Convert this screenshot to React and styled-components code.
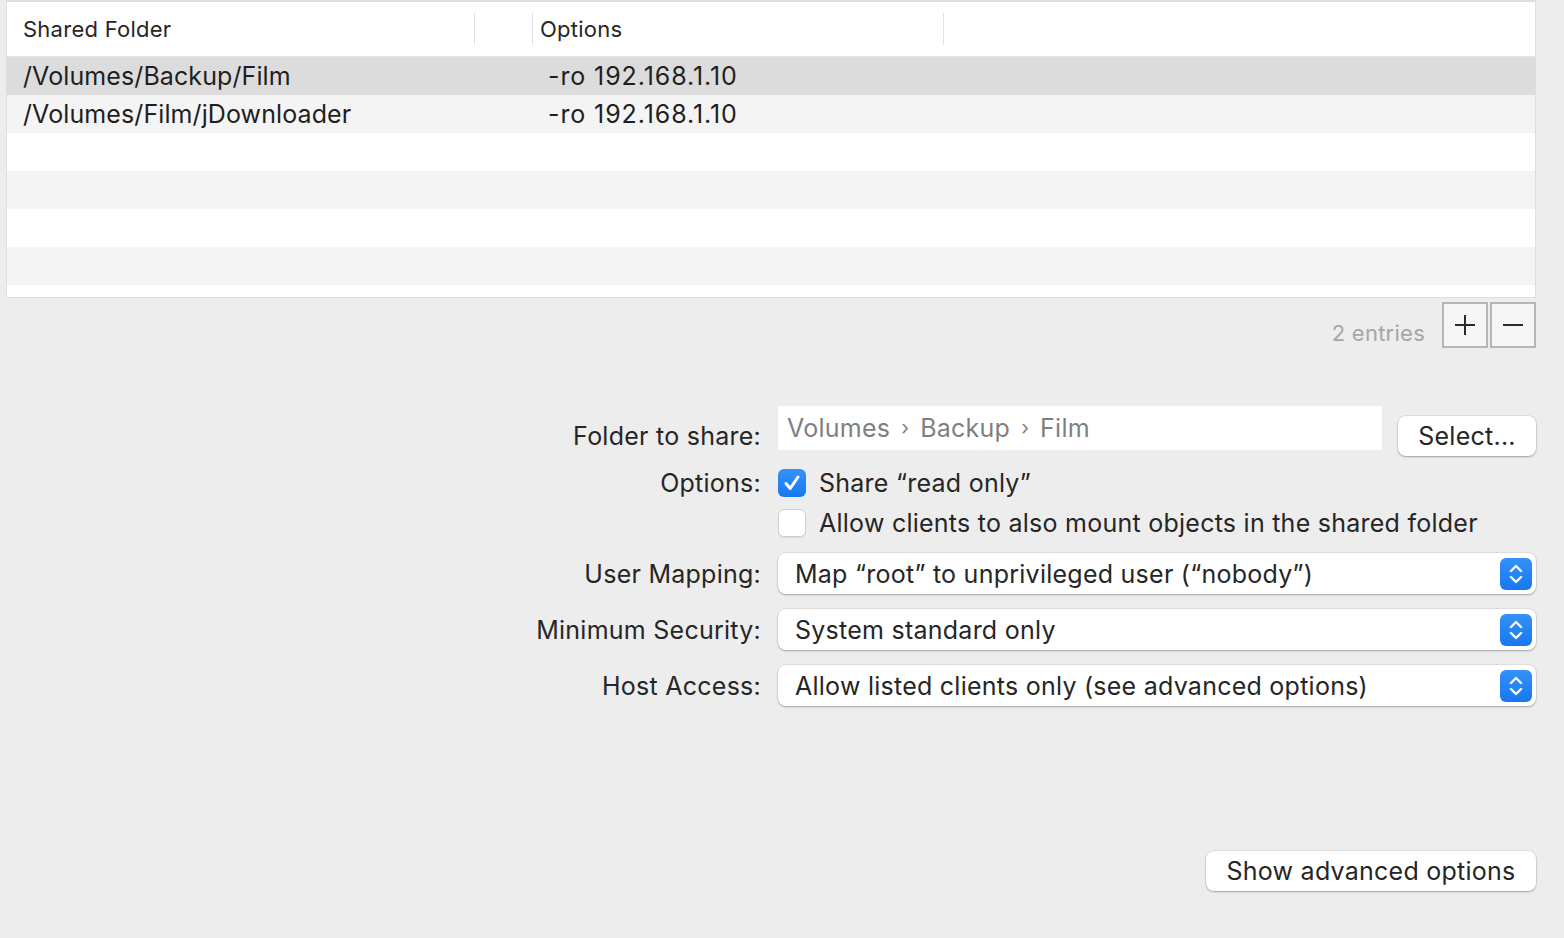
import React from 'react';
import styled, { createGlobalStyle } from 'styled-components';

const GlobalStyle = createGlobalStyle`
  html, body {
    margin: 0;
    padding: 0;
    background: #ededed;
  }
  body {
    font-family: Inter, "Noto Sans", "Liberation Sans", sans-serif;
    color: #262626;
    letter-spacing: 0.25px;
  }
`;

const Page = styled.div`
  width: 1564px;
  height: 938px;
  display: flex;
  flex-direction: column;
  box-sizing: border-box;
  padding: 0 28px 0 6px;
  overflow: hidden;
`;

const Table = styled.div`
  background: #fff;
  border: 1px solid #dfdfdf;
  border-top-width: 2px;
  height: 298px;
  box-sizing: border-box;
  display: flex;
  flex-direction: column;
`;

const HeaderRow = styled.div`
  display: grid;
  grid-template-columns: 468px 58px 411px 1fr;
  height: 54px;
  border-bottom: 1px solid #e4e4e4;
  align-items: center;
`;

const HeaderCell = styled.div`
  height: 32px;
  display: flex;
  align-items: center;
  padding-left: ${p => p.$pad || 7}px;
  font-size: 22px;
  color: #262626;
  border-right: ${p => (p.$last ? 'none' : '1px solid #e2e2e2')};
`;

const Row = styled.div`
  display: grid;
  grid-template-columns: 526px 1fr;
  height: 38px;
  align-items: center;
  background: ${p => (p.$selected ? '#dcdcdc' : p.$odd ? '#f4f4f4' : '#fff')};
  font-size: 25px;
  color: #1f1f1f;
`;

const Cell = styled.div`
  padding-left: ${p => p.$pad}px;
  white-space: nowrap;
  letter-spacing: ${p => (p.$numeric ? '0.9px' : '0.1px')};
`;

const Footer = styled.div`
  display: flex;
  justify-content: flex-end;
  align-items: flex-end;
  margin-top: 4px;
  gap: 2px;
`;

const Count = styled.div`
  font-size: 22px;
  color: #a6a6a6;
  margin-right: 15px;
  padding-bottom: 2px;
`;

const SquareButton = styled.button`
  width: 46px;
  height: 46px;
  box-sizing: border-box;
  border: 2px solid #b6b6b6;
  background: #f6f6f6;
  padding: 0;
  display: flex;
  align-items: center;
  justify-content: center;
`;

const Form = styled.div`
  display: flex;
  flex-direction: column;
  margin-top: 58px;
`;

const FormRow = styled.div`
  display: grid;
  grid-template-columns: 755px 758px;
  column-gap: 17px;
  margin-top: ${p => p.$top || 0}px;
  height: ${p => p.$h}px;
  align-items: center;
`;

const Label = styled.div`
  text-align: right;
  font-size: 25px;
  color: #262626;
  white-space: nowrap;
  align-self: ${p => (p.$end ? 'end' : 'center')};
  line-height: 40px;
`;

const Control = styled.div`
  display: flex;
  align-items: center;
  gap: 16px;
  height: 100%;
`;

const PathField = styled.div`
  width: 604px;
  height: 44px;
  align-self: flex-start;
  background: #fff;
  display: flex;
  align-items: center;
  padding-left: 9px;
  box-sizing: border-box;
  font-size: 25px;
  color: #7f7f7f;
  gap: 11px;
`;

const Sep = styled.span`
  font-size: 20px;
  color: #7f7f7f;
`;

const PushButton = styled.button`
  height: 40px;
  width: ${p => p.$w}px;
  align-self: flex-end;
  background: #fff;
  border: none;
  border-radius: 8px;
  box-shadow: 0 0 0 1px rgba(0, 0, 0, 0.06), 0 1px 2px rgba(0, 0, 0, 0.28);
  font-family: inherit;
  letter-spacing: inherit;
  font-size: 25px;
  color: #262626;
  padding: 0;
`;

const CheckBox = styled.span`
  width: 28px;
  height: 28px;
  box-sizing: border-box;
  border-radius: 6px;
  flex: none;
  display: flex;
  align-items: center;
  justify-content: center;
  background: ${p => (p.$checked ? 'linear-gradient(#3592f8, #1777f1)' : '#fff')};
  border: ${p => (p.$checked ? 'none' : '1px solid #cfcfcf')};
  box-shadow: ${p => (p.$checked ? 'none' : '0 1px 1px rgba(0,0,0,0.08)')};
`;

const CheckText = styled.span`
  font-size: 25px;
  color: #262626;
  white-space: nowrap;
  margin-left: -3px;
`;

const Popup = styled.div`
  width: 758px;
  height: 41px;
  box-sizing: border-box;
  background: #fff;
  border-radius: 8px;
  box-shadow: 0 0 0 1px rgba(0, 0, 0, 0.06), 0 1px 2px rgba(0, 0, 0, 0.26);
  display: flex;
  align-items: center;
  justify-content: space-between;
  padding: 0 4px 0 17px;
  font-size: 25px;
  color: #262626;
  white-space: nowrap;
`;

const Stepper = styled.span`
  width: 32px;
  height: 32px;
  border-radius: 6px;
  background: linear-gradient(#3592f8, #1777f1);
  display: flex;
  align-items: center;
  justify-content: center;
`;

const BottomBar = styled.div`
  display: flex;
  justify-content: flex-end;
  margin-top: 145px;
`;

const Check = () => (
  <svg width="20" height="20" viewBox="0 0 20 20">
    <path d="M4 10.5 L8.2 15.5 L16 4" fill="none" stroke="#fff" strokeWidth="3" strokeLinecap="round" strokeLinejoin="round" />
  </svg>
);

const Chevrons = () => (
  <svg width="18" height="24" viewBox="0 0 18 24">
    <path d="M4 9 L9 4 L14 9" fill="none" stroke="#fff" strokeWidth="2.4" strokeLinecap="round" strokeLinejoin="round" />
    <path d="M4 15 L9 20 L14 15" fill="none" stroke="#fff" strokeWidth="2.4" strokeLinecap="round" strokeLinejoin="round" />
  </svg>
);

const PlusIcon = () => (
  <svg width="24" height="24" viewBox="0 0 24 24">
    <path d="M12 2 V22 M2 12 H22" stroke="#2a2a2a" strokeWidth="2" />
  </svg>
);

const MinusIcon = () => (
  <svg width="24" height="24" viewBox="0 0 24 24">
    <path d="M2 12 H22" stroke="#2a2a2a" strokeWidth="2" />
  </svg>
);

const shares = [
  { path: '/Volumes/Backup/Film', options: '-ro 192.168.1.10' },
  { path: '/Volumes/Film/jDownloader', options: '-ro 192.168.1.10' },
];

const popups = [
  { label: 'User Mapping:', value: 'Map \u201croot\u201d to unprivileged user (\u201cnobody\u201d)', top: 10 },
  { label: 'Minimum Security:', value: 'System standard only', top: 15 },
  { label: 'Host Access:', value: 'Allow listed clients only (see advanced options)', top: 15 },
];

export default function App() {
  const rows = [...shares, null, null, null, null];
  return (
    <Page>
      <GlobalStyle />
      <Table>
        <HeaderRow>
          <HeaderCell $pad={16}>Shared Folder</HeaderCell>
          <HeaderCell />
          <HeaderCell>Options</HeaderCell>
          <HeaderCell $last />
        </HeaderRow>
        {rows.map((r, i) => (
          <Row key={i} $selected={i === 0} $odd={i % 2 === 1}>
            <Cell $pad={16}>{r ? r.path : ''}</Cell>
            <Cell $pad={15} $numeric>{r ? r.options : ''}</Cell>
          </Row>
        ))}
      </Table>

      <Footer>
        <Count>2 entries</Count>
        <SquareButton><PlusIcon /></SquareButton>
        <SquareButton><MinusIcon /></SquareButton>
      </Footer>

      <Form>
        <FormRow $h={50}>
          <Label $end>Folder to share:</Label>
          <Control>
            <PathField>
              Volumes <Sep>›</Sep> Backup <Sep>›</Sep> Film
            </PathField>
            <PushButton $w={138}>Select...</PushButton>
          </Control>
        </FormRow>
        <FormRow $h={40} $top={7}>
          <Label>Options:</Label>
          <Control>
            <CheckBox $checked><Check /></CheckBox>
            <CheckText>Share “read only”</CheckText>
          </Control>
        </FormRow>
        <FormRow $h={40}>
          <span />
          <Control>
            <CheckBox />
            <CheckText>Allow clients to also mount objects in the shared folder</CheckText>
          </Control>
        </FormRow>
        {popups.map(p => (
          <FormRow key={p.label} $h={41} $top={p.top}>
            <Label>{p.label}</Label>
            <Popup>
              {p.value}
              <Stepper><Chevrons /></Stepper>
            </Popup>
          </FormRow>
        ))}
      </Form>

      <BottomBar>
        <PushButton $w={330}>Show advanced options</PushButton>
      </BottomBar>
    </Page>
  );
}
